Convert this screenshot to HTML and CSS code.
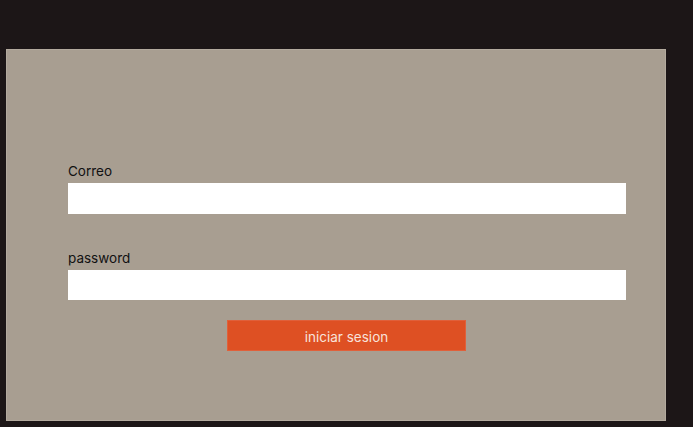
FILE: index.html
```html
<!DOCTYPE html>
<html lang="es">
<head>
<meta charset="utf-8">
<title>Login</title>
<link rel="stylesheet" href="styles.css">
</head>
<body>
<div class="panel">
  <form class="form">
    <label class="label" for="correo">Correo</label>
    <input class="input" id="correo" type="text">
    <label class="label label-second" for="password">password</label>
    <input class="input input-second" id="password" type="password">
    <div class="actions">
      <button class="button" type="button">iniciar sesion</button>
    </div>
  </form>
</div>
</body>
</html>
```
FILE: styles.css
```css
html, body {
  margin: 0;
  padding: 0;
}
body {
  background: #1c1617;
  font-family: Inter, "Noto Sans", sans-serif;
  width: 693px;
  height: 427px;
  overflow: hidden;
}
.panel {
  box-sizing: border-box;
  margin: 49px 0 0 6px;
  width: 660px;
  height: 372px;
  background: #a89e91;
  border: 1px solid #b3aa9e;
  padding: 112px 39px 0 61px;
}
.form {
  display: flex;
  flex-direction: column;
  margin: 0;
}
.label {
  display: block;
  font-size: 13.5px;
  line-height: 16px;
  color: #111;
  padding-top: 1px;
  margin-bottom: 4px;
}
.label-second {
  margin-top: 35px;
}
.input {
  box-sizing: border-box;
  display: block;
  width: 558px;
  height: 31px;
  margin: 0;
  border: none;
  background: #fff;
  padding: 0 8px;
}
.input-second {
  height: 30px;
}
.actions {
  display: flex;
  justify-content: center;
  margin-top: 20px;
}
.button {
  box-sizing: border-box;
  width: 239px;
  height: 31px;
  margin-left: -1px;
  background: #de5023;
  border: 1px solid #e0603a;
  color: #f8e2da;
  font-family: Inter, "Noto Sans", sans-serif;
  font-size: 13.5px;
  padding: 2px 0 0 0;
}
```
